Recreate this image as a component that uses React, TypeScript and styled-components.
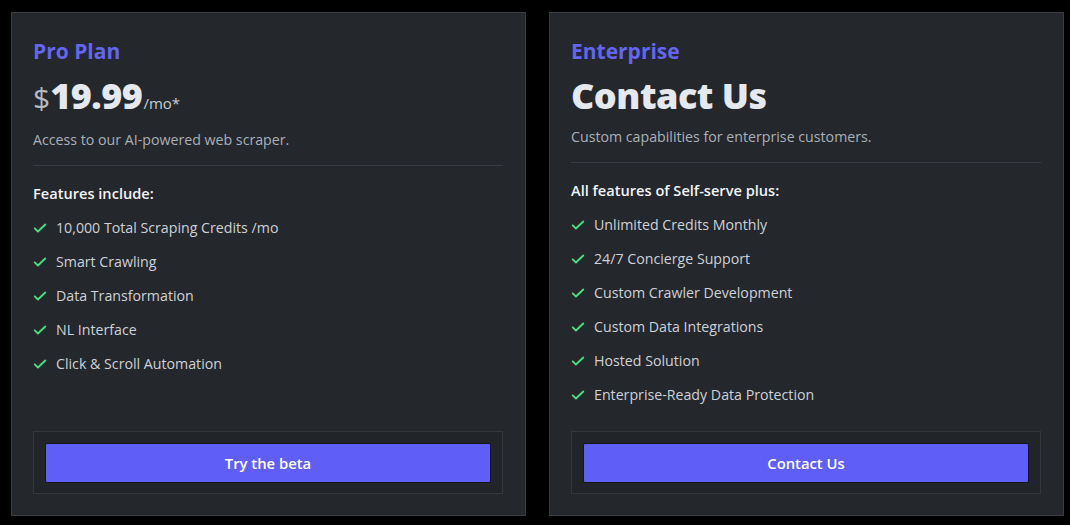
import styled, { createGlobalStyle } from 'styled-components';

const GlobalStyle = createGlobalStyle`
  html, body {
    margin: 0;
    padding: 0;
    background: #000;
  }
  * {
    box-sizing: border-box;
  }
`;

const Page = styled.div`
  display: flex;
  gap: 23px;
  width: 1070px;
  height: 525px;
  padding: 12px 6px 9px 11px;
  font-family: 'Open Sans', 'Liberation Sans', sans-serif;
`;

const Card = styled.div`
  display: flex;
  flex-direction: column;
  width: 515px;
  height: 504px;
  padding: 23px 22px 21px 21px;
  background: #24272c;
  border: 1px solid #393c41;
`;

const PlanName = styled.h2`
  margin: 0;
  height: 30px;
  font-size: 21px;
  font-weight: 700;
  line-height: 30px;
  color: #6366f1;
`;

const Price = styled.div`
  display: flex;
  align-items: baseline;
  height: 44px;
  margin-top: 5px;
  color: #e5e9ee;
`;

const Currency = styled.span`
  font-size: 30px;
  font-weight: 500;
  color: #b4bac2;
`;

const Amount = styled.span`
  font-size: 36px;
  font-weight: 800;
  letter-spacing: -0.5px;
`;

const Period = styled.span`
  margin-left: 1px;
  font-size: 15px;
  color: #c8ccd2;
`;

const Description = styled.p<{ $top: number }>`
  margin: ${(p) => p.$top}px 0 0;
  font-size: 14.2px;
  line-height: 20px;
  color: #aab0b8;
`;

const Divider = styled.hr`
  margin: 15px 0 0;
  border: 0;
  border-top: 1px solid #3a3d43;
`;

const FeatureTitle = styled.h3`
  margin: 17px 0 0;
  font-size: 14.6px;
  font-weight: 600;
  line-height: 20px;
  color: #f2f4f6;
`;

const FeatureList = styled.ul`
  display: flex;
  flex-direction: column;
  gap: 14px;
  margin: 15px 0 0;
  padding: 0;
  list-style: none;
`;

const FeatureItem = styled.li`
  display: flex;
  align-items: center;
  gap: 9px;
  font-size: 14.2px;
  line-height: 20px;
  color: #ced2d8;
`;

const Footer = styled.div`
  margin-top: auto;
  padding: 11px 11px 10px;
  background: #212428;
  border: 1px solid #34373c;
`;

const ActionButton = styled.button`
  width: 100%;
  height: 40px;
  border: 1px solid #15161a;
  border-radius: 2px;
  background: #5f5ff8;
  color: #fff;
  font-family: inherit;
  font-size: 14.8px;
  font-weight: 600;
  cursor: pointer;
`;

const Check = () => (
  <svg width="14" height="14" viewBox="0 0 24 24" fill="none" stroke="#4ade80" strokeWidth="3.2" strokeLinecap="round" strokeLinejoin="round">
    <path d="M3 12.5l5.5 5.5L21 6" />
  </svg>
);

const proFeatures = [
  '10,000 Total Scraping Credits /mo',
  'Smart Crawling',
  'Data Transformation',
  'NL Interface',
  'Click & Scroll Automation',
];

const enterpriseFeatures = [
  'Unlimited Credits Monthly',
  '24/7 Concierge Support',
  'Custom Crawler Development',
  'Custom Data Integrations',
  'Hosted Solution',
  'Enterprise-Ready Data Protection',
];

const Features = ({ items }: { items: string[] }) => (
  <FeatureList>
    {items.map((item) => (
      <FeatureItem key={item}>
        <Check />
        {item}
      </FeatureItem>
    ))}
  </FeatureList>
);

export default function App() {
  return (
    <>
      <GlobalStyle />
      <Page>
        <Card>
          <PlanName>Pro Plan</PlanName>
          <Price>
            <Currency>$</Currency>
            <Amount>19.99</Amount>
            <Period>/mo*</Period>
          </Price>
          <Description $top={15}>Access to our AI-powered web scraper.</Description>
          <Divider />
          <FeatureTitle>Features include:</FeatureTitle>
          <Features items={proFeatures} />
          <Footer>
            <ActionButton>Try the beta</ActionButton>
          </Footer>
        </Card>
        <Card>
          <PlanName>Enterprise</PlanName>
          <Price>
            <Amount>Contact Us</Amount>
          </Price>
          <Description $top={12}>Custom capabilities for enterprise customers.</Description>
          <Divider />
          <FeatureTitle>All features of Self-serve plus:</FeatureTitle>
          <Features items={enterpriseFeatures} />
          <Footer>
            <ActionButton>Contact Us</ActionButton>
          </Footer>
        </Card>
      </Page>
    </>
  );
}
